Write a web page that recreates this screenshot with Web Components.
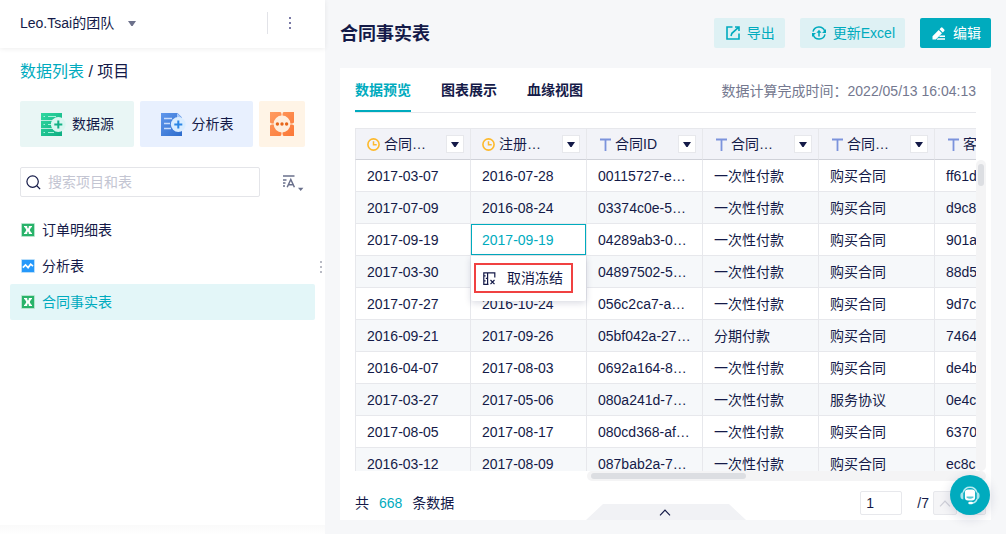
<!DOCTYPE html>
<html lang="zh-CN">
<head>
<meta charset="utf-8">
<title>合同事实表</title>
<style>
  * {
    box-sizing: border-box;
  }
  body {
    margin: 0;
    width: 1006px;
    height: 534px;
    overflow: hidden;
    font: 14px/20px "Liberation Sans", "Noto Sans CJK SC", sans-serif;
    color: #141a48;
    --teal: #00abbe;
    --line: #e7e8ec;
  }
</style>
</head>
<body>
<bi-app></bi-app>

<script>
const ICONS = {
  caret: [8, 5, '<path d="M0 0h8L4.6 5H3.4z" fill="currentColor"/>'],
  more: [4, 14, '<path d="M1 1h2v2H1zM1 6h2v2H1zM1 11h2v2H1z" fill="currentColor"/>'],
  clock: [13, 13, '<circle cx="6.5" cy="6.5" r="5.6" fill="none" stroke="#fdb92c" stroke-width="1.6"/><path d="M6.5 3.2v3.6h3.2" fill="none" stroke="#fdb92c" stroke-width="1.5"/>'],
  text: [13, 13, '<path d="M2 1.5h11M7.5 1.5V13" fill="none" stroke="#7c93dc" stroke-width="1.8"/>'],
  search: [15, 15, '<circle cx="6.6" cy="6.6" r="5.7" fill="none" stroke="currentColor" stroke-width="1.2"/><path d="M10.8 10.8l3.3 3.3" stroke="currentColor" stroke-width="1.3"/>'],
  sort: [21, 18, '<path d="M1 2h11.5M1 6h3.5M1 9h2.5M1 12h2" stroke="#6a708c" stroke-width="1.3" fill="none"/><path d="M5.2 13.2L8.8 5.5l3.6 7.7M6.5 10.8h4.6" stroke="#6a708c" stroke-width="1.5" fill="none"/><path d="M16 13.8h5.4L18.7 17z" fill="#6a708c"/>'],
  excel: [14, 14, '<rect width="14" height="14" rx="1" fill="#b5e5cc"/><rect x="1" y="1" width="12" height="12" fill="#29b36a"/><path d="M3 3h3.2v1.2L7 5.8l.8-1.6V3H11v1.3h-.8L8.7 7l1.5 2.7h.8V11H7.8V9.8L7 8.2l-.8 1.6V11H3V9.7h.8L5.3 7 3.8 4.3H3z" fill="#fff"/>'],
  chart: [14, 14, '<rect width="14" height="14" rx="1" fill="#b9defa"/><rect x="1" y="1" width="12" height="12" fill="#2598fa"/><path d="M1.8 8.6l2.7-2.7 2.6 2.7 2.6-3.4 2.3 2" stroke="#fff" stroke-width="1.7" fill="none"/>'],
  export: [14, 14, '<path d="M6.5 1H1v12h12V7.5M9 1h4v4M5 10l.9-2.7 6.6-6" fill="none" stroke="currentColor" stroke-width="1.6"/>'],
  refresh: [14, 14, '<path d="M1 5.6A6.1 6.1 0 0 1 12.7 5M13 8.4A6.1 6.1 0 0 1 1.3 9" fill="none" stroke="currentColor" stroke-width="1.5"/><path d="M14 3v4h-4zM0 11V7h4z" fill="currentColor"/><path d="M7 10.4V6" stroke="currentColor" stroke-width="1.5"/><path d="M4.4 6.8L7 3.8l2.6 3z" fill="currentColor"/>'],
  edit: [13, 13, '<path d="M.5 9.2L6.7 3 10 6.3 3.8 12.5H.5zM7.5 2.2L8.9.8a1.2 1.2 0 0 1 1.7 0l1.6 1.6a1.2 1.2 0 0 1 0 1.7l-1.4 1.4zM8.4 8.6H13v1.4H7zM5.8 11.2H13v1.5H4.7z" fill="currentColor"/>'],
  unfreeze: [13, 13, '<path d="M11.8 5.5V.8H.8v11.5h4.7M4.6.8v11.5M.8 3.8h1.8M2.8 6.4h1.8M.8 8.8h1.8" fill="none" stroke="currentColor" stroke-width="1.2"/><path d="M7.5 8l4 4.2M11.5 8l-4 4.2" stroke="currentColor" stroke-width="1.2"/>'],
  up: [12, 7, '<path d="M1 6.3L6 1l5 5.3" fill="none" stroke="currentColor" stroke-width="1.2"/>'],
  source: [26, 25, `<defs><linearGradient id="g" y2="1" x2="1"><stop stop-color="#30d8a0"/><stop offset="1" stop-color="#0eae82"/></linearGradient></defs>
    <path d="M1 1h21v7.3H1zM1 9h21v7.3H1zM1 17h21v7H1z" fill="url(#g)"/>
    <path d="M3.5 4.5h1.5M8 4.5h8M3.5 12.5h1.5M8 12.5h3M3.5 20.5h1.5M8 20.5h6" stroke="#a5f3da" stroke-width="1.1"/>
    <circle cx="18.3" cy="12.5" r="7.4" fill="#d9f6f0"/><path d="M18.3 8.5v8M14.3 12.5h8" stroke="#12b184" stroke-width="2"/>`],
  analysis: [26, 25, `<defs><linearGradient id="g" y2="1" x2="1"><stop stop-color="#6097ec"/><stop offset="1" stop-color="#2d6ccc"/></linearGradient></defs>
    <path d="M1 1h16.5L22 5.5V24H1z" fill="url(#g)"/><path d="M17 1l5 5h-5z" fill="#a8c9fa"/>
    <path d="M4 6.5h8M4 11.5h6M4 16.5h7" stroke="#c8dcfc" stroke-width="1.6"/>
    <circle cx="18.3" cy="12.5" r="7.4" fill="#d9ecff"/><path d="M18.3 8.5v8M14.3 12.5h8" stroke="#2b86e5" stroke-width="2"/>`],
  moreapps: [26, 26, `<defs><linearGradient id="g" y2="1"><stop stop-color="#ff9b60"/><stop offset="1" stop-color="#fb7837"/></linearGradient></defs>
    <path d="M1 1h10.5l1.5 2 1.5-2H25v10.5L23 13l2 1.5V25H14.5L13 23l-1.5 2H1V14.5L3 13l-2-1.5z" fill="url(#g)"/>
    <path d="M13 1v24M1 13h24" stroke="#ffe3cb" stroke-width="1.2"/>
    <circle cx="13" cy="13" r="8.4" fill="#ffeedd"/><g fill="#e66619"><circle cx="8.4" cy="13" r="1.7"/><circle cx="13" cy="13" r="1.7"/><circle cx="17.6" cy="13" r="1.7"/></g>`],
  service: [20, 19, `<path d="M3.2 6.5Q4.5 1.2 10 1.2T16.8 6.5" fill="none" stroke="#b9edf2" stroke-width="1.5"/>
    <path d="M3.3 6v7.4C.8 13.2.4 11.5.4 9.7S.8 6.2 3.3 6zM16.7 6v7.4c2.5-.2 2.9-1.9 2.9-3.7s-.4-3.5-2.9-3.7z" fill="#a5e4eb"/>
    <rect x="4.9" y="3.4" width="10.2" height="11.2" rx="3" fill="#fff"/><path d="M6.6 10.6h6.8v1.2q-3.4 2-6.8 0z" fill="#58c9d5"/>
    <path d="M17 13q-1.2 3.8-5 4" fill="none" stroke="#b9edf2" stroke-width="1.5"/><rect x="8.3" y="15.7" width="4.6" height="2.6" rx="1.3" fill="#fff"/>`]
};

class BaseElement extends HTMLElement {
  constructor() {
    super();
    this.shadowDOM = this.attachShadow({mode: "open"});
  }

  connectedCallback() {
    this.render();
  }

  draw(css, html) {
    this.shadowDOM.innerHTML = `<style>* { box-sizing: border-box; } ${css}</style>${html}`;
  }
}

class BiIcon extends BaseElement {
  render() {
    const [w, h, body] = ICONS[this.getAttribute("name")];
    this.draw(`
      :host { display: block; flex: none; width: ${w}px; height: ${h}px; }
      svg { display: block; overflow: visible; }`,
      `<svg width="${w}" height="${h}" viewBox="0 0 ${w} ${h}">${body}</svg>`);
  }
}

class ToolButton extends BaseElement {
  render() {
    this.draw(`
      :host {
        display: flex; align-items: center; gap: 7px;
        height: 30px; padding: 0 10px 0 12px; border-radius: 2px;
        background: #def1f4; color: var(--teal);
      }
      :host([primary]) { width: 71px; gap: 8px; background: var(--teal); color: #fff; }`,
      `<bi-icon name="${this.getAttribute("icon")}"></bi-icon><span><slot></slot></span>`);
  }
}

class CreateCard extends BaseElement {
  render() {
    this.draw(`
      :host {
        display: flex; align-items: center; justify-content: center; gap: 6px;
        height: 46px; border-radius: 2px; font-size: 14px;
      }`,
      `<bi-icon name="${this.getAttribute("icon")}"></bi-icon><slot></slot>`);
  }
}

class SideItem extends BaseElement {
  render() {
    this.draw(`
      :host {
        display: flex; align-items: center; gap: 7px;
        height: 36px; padding-left: 11px; border-radius: 2px;
      }
      :host([active]) { background: #e3f6f8; color: var(--teal); }`,
      `<bi-icon name="${this.getAttribute("icon")}"></bi-icon><span><slot></slot></span>`);
  }
}

class SideBar extends BaseElement {
  render() {
    this.draw(`
      :host { display: flex; flex-direction: column; position: relative; background: #fff; }
      header {
        display: flex; align-items: center; height: 48px; padding: 0 33px 2px 20px;
        box-shadow: 0 1px 5px rgba(0, 0, 0, .07);
      }
      header .caret { margin-left: 14px; color: #6c718b; }
      header .dots { color: #7a7aa6; }
      .sep { width: 1px; height: 22px; margin: 0 20px 0 auto; background: #e2e3e8; }
      .crumb { margin: 13px 20px 0; font-size: 16px; line-height: 22px; }
      .crumb a { color: var(--teal); }
      .cards { display: grid; grid-template-columns: 114px 113px 46px; gap: 6px; margin: 18px 20px 0; }
      .tools { display: flex; align-items: center; margin: 20px 22px 0 20px; }
      .search {
        display: flex; align-items: center; gap: 7px; width: 240px; height: 30px; padding-left: 5px;
        border: 1px solid #e4e5e9; border-radius: 2px;
      }
      .search span { color: #c3c5d2; }
      .tools .sort { margin: 1px 0 0 auto; }
      nav { margin: 15px 10px 0; }
      .grip { position: absolute; left: 319px; top: 260px; color: #b8bac4; }
      footer { height: 9px; margin-top: auto; background: linear-gradient(#fafafa, #fefefe); }`,
      `<header>
        <span>Leo.Tsai的团队</span><bi-icon class="caret" name="caret"></bi-icon>
        <i class="sep"></i><bi-icon class="dots" name="more"></bi-icon>
      </header>
      <div class="crumb"><a>数据列表</a> / <span>项目</span></div>
      <div class="cards">
        <create-card icon="source" style="background:#e9f6f5">数据源</create-card>
        <create-card icon="analysis" style="background:#e8f0fe">分析表</create-card>
        <create-card icon="moreapps" style="background:#fff4e6"></create-card>
      </div>
      <div class="tools">
        <div class="search"><bi-icon name="search"></bi-icon><span>搜索项目和表</span></div>
        <bi-icon class="sort" name="sort"></bi-icon>
      </div>
      <nav>
        <side-item icon="excel">订单明细表</side-item>
        <side-item icon="chart">分析表</side-item>
        <side-item icon="excel" active>合同事实表</side-item>
      </nav>
      <bi-icon class="grip" name="more"></bi-icon>
      <footer></footer>`);
  }
}

class TabBar extends BaseElement {
  render() {
    this.draw(`
      :host { display: flex; gap: 30px; height: 45px; border-bottom: 1px solid var(--line); }
      b { height: 44px; padding-top: 12px; }
      .on { color: var(--teal); border-bottom: 2px solid var(--teal); }
      span { margin: 13px 0 0 auto; color: #74788f; }`,
      `<b class="on">数据预览</b><b>图表展示</b><b>血缘视图</b>
      <span><slot></slot></span>`);
  }
}

class HeadCell extends BaseElement {
  render() {
    this.draw(`
      :host {
        display: flex; align-items: center; height: 32px; padding: 0 6px 0 11px;
        border: solid var(--line); border-width: 1px 0 1px 1px; border-bottom-color: #cfd1d8;
        background: #f2f3f8;
      }
      span { margin-left: 4px; white-space: nowrap; }
      div {
        display: grid; place-items: center; width: 18px; height: 18px; margin-left: auto; flex: none;
        border: 1px solid var(--line); background: #fff;
      }`,
      `<bi-icon name="${this.getAttribute("icon")}"></bi-icon>
      <span><slot></slot></span><div><bi-icon name="caret"></bi-icon></div>`);
  }
}

class FreezeMenu extends BaseElement {
  render() {
    this.draw(`
      :host {
        display: block; width: 115px; height: 45px; padding: 7px 3px;
        background: #fff; box-shadow: 0 2px 7px rgba(20, 26, 72, .16); border-radius: 0 0 2px 2px;
      }
      div {
        display: flex; align-items: center; gap: 11px; width: 99px; height: 30px; padding-left: 7px;
        border: 2px solid #f04141;
      }`,
      `<div><bi-icon name="unfreeze"></bi-icon><span><slot></slot></span></div>`);
  }
}

class DataTable extends BaseElement {
  render() {
    const head = [["clock", "合同…"], ["clock", "注册…"], ["text", "合同ID"], ["text", "合同…"], ["text", "合同…"], ["text", "客"]];
    const rows = [
      ["2017-03-07", "2016-07-28", "00115727-e…", "一次性付款", "购买合同", "ff61d"],
      ["2017-07-09", "2016-08-24", "03374c0e-5…", "一次性付款", "购买合同", "d9c8"],
      ["2017-09-19", "2017-09-19", "04289ab3-0…", "一次性付款", "购买合同", "901a"],
      ["2017-03-30", "", "04897502-5…", "一次性付款", "购买合同", "88d5"],
      ["2017-07-27", "2016-10-24", "056c2ca7-a…", "一次性付款", "购买合同", "9d7c"],
      ["2016-09-21", "2017-09-26", "05bf042a-27…", "分期付款", "购买合同", "7464"],
      ["2016-04-07", "2017-08-03", "0692a164-8…", "一次性付款", "购买合同", "de4b"],
      ["2017-03-27", "2017-05-06", "080a241d-7…", "一次性付款", "服务协议", "0e4c"],
      ["2017-08-05", "2017-08-17", "080cd368-af…", "一次性付款", "购买合同", "6370"],
      ["2016-03-12", "2017-08-09", "087bab2a-7…", "一次性付款", "购买合同", "ec8c"]
    ];
    this.draw(`
      :host { display: grid; grid-template-columns: 621px 10px; grid-template-rows: 343px 10px; }
      .view { overflow: hidden; }
      .row { display: grid; grid-template-columns: 115px repeat(5, 116px); width: 695px; }
      .cell {
        position: relative; height: 32px; padding: 6px 0 0 11px; white-space: nowrap;
        border: solid var(--line); border-width: 0 0 1px 1px;
      }
      .row:nth-child(odd) .cell { background: #f6f8fa; }
      .picked { color: var(--teal); }
      .picked::after { content: ""; position: absolute; inset: 0; border: 1px solid var(--teal); }
      freeze-menu { position: absolute; left: 0; top: 32px; z-index: 2; color: #141a48; }
      .v { margin-top: 32px; padding: 4px 2px; background: #f4f4f5; border-radius: 5px; }
      .v i { display: block; width: 6px; height: 22px; border-radius: 3px; background: #dcdee2; }
      .h { grid-column: 1 / 3; margin-left: 232px; padding: 2px 4px; background: #f4f4f5; border-radius: 5px; }
      .h i { display: block; width: 155px; height: 6px; border-radius: 3px; background: #dcdee2; }`,
      `<div class="view">
        <div class="row">${head.map(([icon, name]) => `<head-cell icon="${icon}">${name}</head-cell>`).join("")}</div>
        ${rows.map((row, r) => `<div class="row">${row.map((text, c) =>
          r === 2 && c === 1
            ? `<div class="cell picked">${text}<freeze-menu>取消冻结</freeze-menu></div>`
            : `<div class="cell">${text}</div>`).join("")}</div>`).join("")}
      </div>
      <div class="v"><i></i></div>
      <div class="h"><i></i></div>`);
  }
}

class PageFooter extends BaseElement {
  render() {
    this.draw(`
      :host { display: flex; position: relative; align-items: center; height: 39px; padding: 5px 5px 0 0; }
      em { margin: 0 10px; font-style: normal; color: var(--teal); }
      .page {
        width: 42px; height: 24px; margin: 0 15px 0 auto; padding: 1px 5px;
        border: 1px solid var(--line); border-radius: 2px;
      }
      .btn {
        display: grid; place-items: center; width: 24px; height: 24px; margin-left: 4px;
        border: 1px solid var(--line); border-radius: 2px; background: #f5f5f7; color: #cfd0d8;
      }
      .btn + .btn { margin-left: 5px; }
      .fold {
        position: absolute; left: 231px; bottom: 0; width: 160px; height: 16px; padding-right: 2px;
        display: grid; place-items: center; background: #f1f2f5; color: #141a48;
        clip-path: polygon(17px 0, 143px 0, 100% 100%, 0 100%);
      }`,
      `<span>共</span><em>668</em><span>条数据</span>
      <div class="page">1</div><span>/7</span>
      <div class="btn"><bi-icon name="up"></bi-icon></div>
      <div class="btn"><bi-icon name="up" style="transform:rotate(180deg)"></bi-icon></div>
      <div class="fold"><bi-icon name="up"></bi-icon></div>`);
  }
}

class BiApp extends BaseElement {
  render() {
    this.draw(`
      :host { display: grid; grid-template-columns: 325px 1fr; height: 534px; position: relative; }
      main { padding: 18px 15px 0; background: #f6f7f9; }
      .top { display: flex; align-items: center; gap: 15px; height: 30px; }
      h1 { margin: 2px auto 0 0; font-size: 18px; line-height: 26px; }
      section { height: 452px; margin-top: 20px; padding: 0 0 0 15px; background: #fff; }
      tab-bar { margin-right: 15px; }
      data-table { margin-top: 15px; }
      .service {
        position: absolute; left: 950px; top: 475px; width: 40px; height: 40px;
        display: grid; place-items: center; border-radius: 50%;
        background: var(--teal); box-shadow: 0 3px 12px rgba(20, 26, 72, .16);
      }`,
      `<side-bar></side-bar>
      <main>
        <div class="top">
          <h1>合同事实表</h1>
          <tool-button icon="export">导出</tool-button>
          <tool-button icon="refresh">更新Excel</tool-button>
          <tool-button icon="edit" primary>编辑</tool-button>
        </div>
        <section>
          <tab-bar>数据计算完成时间：2022/05/13 16:04:13</tab-bar>
          <data-table></data-table>
          <page-footer></page-footer>
        </section>
      </main>
      <div class="service"><bi-icon name="service"></bi-icon></div>`);
  }
}

customElements.define("bi-icon", BiIcon);
customElements.define("tool-button", ToolButton);
customElements.define("create-card", CreateCard);
customElements.define("side-item", SideItem);
customElements.define("side-bar", SideBar);
customElements.define("tab-bar", TabBar);
customElements.define("head-cell", HeadCell);
customElements.define("freeze-menu", FreezeMenu);
customElements.define("data-table", DataTable);
customElements.define("page-footer", PageFooter);
customElements.define("bi-app", BiApp);
</script>
</body>
</html>
